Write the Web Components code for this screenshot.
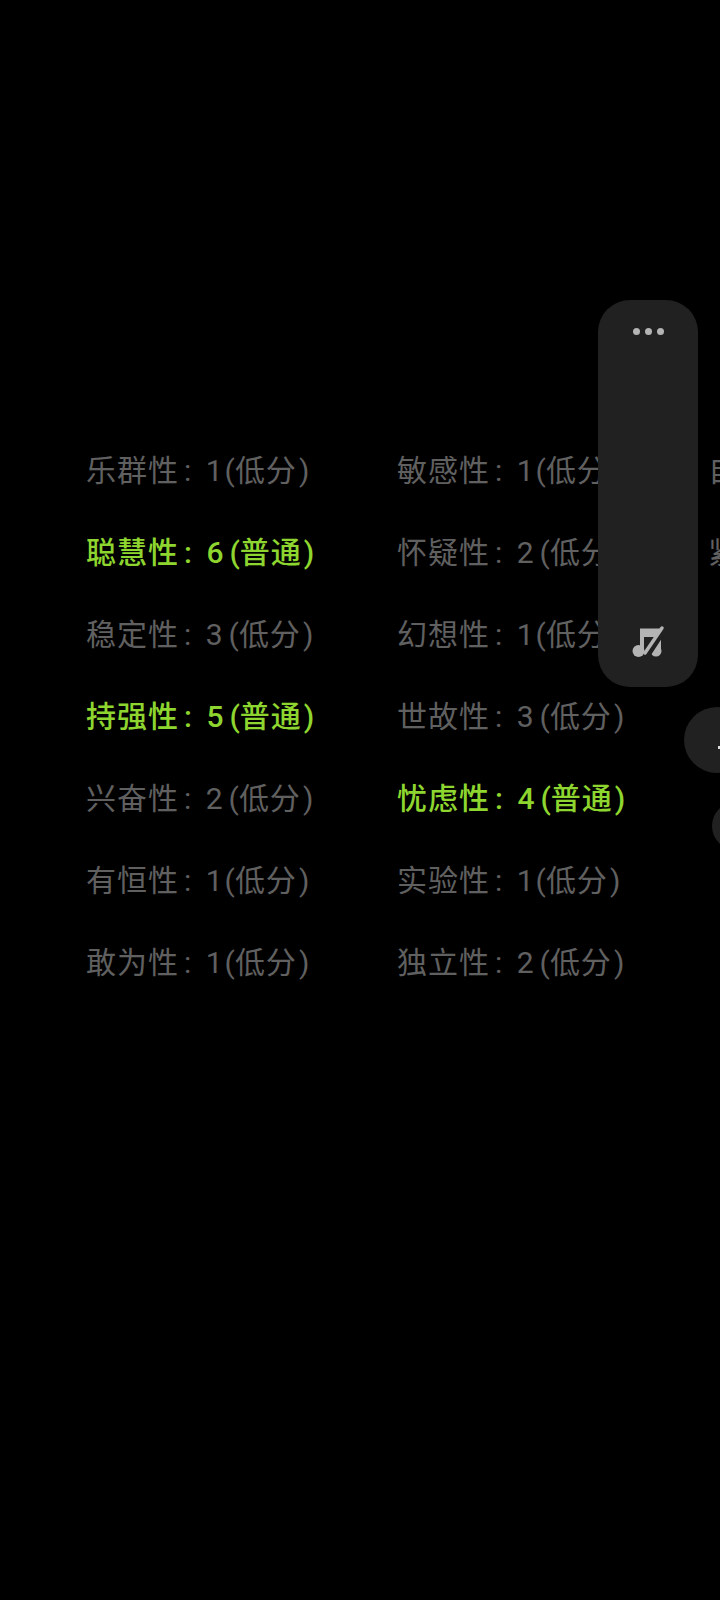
<!DOCTYPE html>
<html lang="zh">
<head>
<meta charset="utf-8">
<title>16PF</title>
<style>
  html, body { margin: 0; padding: 0; background: #000; }
  body { width: 720px; height: 1600px; overflow: hidden; position: relative; }
</style>
</head>
<body>
<trait-grid>
  <trait-item score="1" level="低分">乐群性</trait-item>
  <trait-item score="6" level="普通" high>聪慧性</trait-item>
  <trait-item score="3" level="低分">稳定性</trait-item>
  <trait-item score="5" level="普通" high>持强性</trait-item>
  <trait-item score="2" level="低分">兴奋性</trait-item>
  <trait-item score="1" level="低分">有恒性</trait-item>
  <trait-item score="1" level="低分">敢为性</trait-item>
  <trait-item score="1" level="低分">敏感性</trait-item>
  <trait-item score="2" level="低分">怀疑性</trait-item>
  <trait-item score="1" level="低分">幻想性</trait-item>
  <trait-item score="3" level="低分">世故性</trait-item>
  <trait-item score="4" level="普通" high>忧虑性</trait-item>
  <trait-item score="1" level="低分">实验性</trait-item>
  <trait-item score="2" level="低分">独立性</trait-item>
  <trait-item score="1" level="低分">自律性</trait-item>
  <trait-item score="2" level="低分">紧张性</trait-item>
</trait-grid>
<side-panel></side-panel>
<float-button style="left:684px;top:707px;width:66px;height:66px"><i style="position:absolute;left:34px;top:39px;width:3px;height:3px;background:#ddd"></i></float-button>
<float-button style="left:712px;top:802px;width:48px;height:48px"></float-button>
<script>
  class TraitItem extends HTMLElement {
    constructor() {
      super();
      this.attachShadow({mode: 'open'});
      let score = this.getAttribute('score');
      let level = this.getAttribute('level');
      let scoreClass = score === '1' ? 'score' : 'score wide';
      this.shadowRoot.innerHTML = `
        <style>
          :host {
            display: block;
            height: 82px;
            line-height: 82px;
            white-space: nowrap;
            font-family: "Roboto", "Noto Sans CJK SC", sans-serif;
            font-size: 30px;
            letter-spacing: 1px;
            color: #606060;
          }
          :host([high]) {
            color: #8ed62f;
            font-weight: 500;
          }
          .colon { margin: 0 5px 0 5px; }
          .score { letter-spacing: 0; }
          .wide { margin-right: 4px; }
          .open { margin: 0 0 0 2px; letter-spacing: 0; }
          .close { margin-left: 2px; }
        </style>
        <slot></slot><span class="colon">:</span> <span class="${scoreClass}">${score}</span><span class="open">(</span>${level}<span class="close">)</span>`;
    }
  }
  customElements.define('trait-item', TraitItem);

  class TraitGrid extends HTMLElement {
    constructor() {
      super();
      this.attachShadow({mode: 'open'});
      this.shadowRoot.innerHTML = `
        <style>
          :host {
            display: grid;
            grid-template-rows: repeat(7, 82px);
            grid-auto-flow: column;
            grid-auto-columns: 311px;
            padding: 430px 0 0 86px;
            width: 1000px;
          }
        </style>
        <slot></slot>`;
    }
  }
  customElements.define('trait-grid', TraitGrid);

  class SidePanel extends HTMLElement {
    constructor() {
      super();
      this.attachShadow({mode: 'open'});
      this.shadowRoot.innerHTML = `
        <style>
          :host {
            position: absolute;
            left: 598px;
            top: 300px;
            width: 100px;
            height: 387px;
            box-sizing: border-box;
            padding: 28px 0 21px;
            display: flex;
            flex-direction: column;
            justify-content: space-between;
            align-items: center;
            background: #212121;
            border-radius: 32px;
          }
          .dots { display: flex; gap: 5px; }
          .dots i { width: 7px; height: 7px; border-radius: 50%; background: #b4b4b4; }
          svg { display: block; }
        </style>
        <div class="dots"><i></i><i></i><i></i></div>
        <svg width="46" height="46" viewBox="0 0 46 46">
          <path fill="#b4b4b4" d="M15 8.500H36V31H31.500V17H19V31H15Z"/>
          <circle fill="#b4b4b4" cx="13.500" cy="31" r="6"/>
          <circle fill="#b4b4b4" cx="31" cy="31" r="5.500"/>
          <path stroke="#212121" stroke-width="6" fill="none" d="M42 5L21 37"/>
          <path stroke="#b4b4b4" stroke-width="3.500" fill="none" stroke-linecap="round" d="M37 8L20 33"/>
        </svg>`;
    }
  }
  customElements.define('side-panel', SidePanel);

  class FloatButton extends HTMLElement {
    constructor() {
      super();
      this.attachShadow({mode: 'open'});
      this.shadowRoot.innerHTML = `
        <style>
          :host {
            position: absolute;
            display: block;
            background: #212121;
            border-radius: 50%;
          }
        </style>
        <slot></slot>`;
    }
  }
  customElements.define('float-button', FloatButton);
</script>
</body>
</html>
